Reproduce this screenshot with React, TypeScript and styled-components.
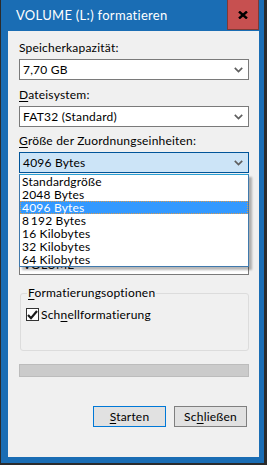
import { styled, createGlobalStyle } from 'styled-components'

const GlobalStyle = createGlobalStyle`
  html, body {
    margin: 0;
    padding: 0;
    background: #ffffff;
  }
  body {
    font-family: Lato, "Liberation Sans", sans-serif;
    font-size: 12px;
    letter-spacing: 0.2px;
    color: #000000;
  }
`

const Window = styled.div`
  box-sizing: border-box;
  width: 267px;
  height: 465px;
  display: flex;
  flex-direction: column;
  background: #1a6db4;
  border-left: 1px solid #2b2b2b;
  border-right: 3px solid #2b2b2b;
  border-bottom: 2px solid #2b2b2b;
  padding: 0 5px 6px 7px;
`

const TitleBar = styled.div`
  display: flex;
  align-items: flex-start;
  height: 31px;
  flex-shrink: 0;
`

const Title = styled.div`
  padding-left: 8px;
  line-height: 30px;
  font-size: 13px;
  letter-spacing: 0.3px;
  color: #ffffff;
`

const CloseButton = styled.div`
  box-sizing: border-box;
  margin-left: auto;
  width: 32px;
  height: 30px;
  background: #c75050;
  border: 1px solid #7d3a36;
  border-top: none;
  display: grid;
  place-items: center;
  padding-top: 1px;
`

const Panel = styled.div`
  position: relative;
  flex: 1;
  background: #f0f0f0;
  padding: 9px 10px 0 11px;
  display: flex;
  flex-direction: column;
`

const Field = styled.div<{ $mt?: number }>`
  position: relative;
  display: flex;
  flex-direction: column;
  margin-top: ${(p) => p.$mt ?? 0}px;
`

const Label = styled.div`
  line-height: 15px;
  margin-bottom: 4px;
  white-space: nowrap;
`

const Key = styled.span`
  text-decoration: underline;
  text-underline-offset: 2px;
`

const SelectBox = styled.div<{ $focused?: boolean }>`
  box-sizing: border-box;
  height: 21px;
  display: flex;
  align-items: center;
  padding: 0 5px 0 3px;
  background: ${(p) => (p.$focused ? '#cce4f7' : '#ffffff')};
  border: 1px solid ${(p) => (p.$focused ? '#005499' : '#7a7a7a')};
`

const SelectValue = styled.span`
  flex: 1;
  line-height: 19px;
`

const DropList = styled.div`
  position: absolute;
  top: calc(100% + 1px);
  left: 0;
  right: 0;
  z-index: 2;
  background: #ffffff;
  border: 1px solid #3f79ad;
  border-top-color: #2aa0d4;
  box-shadow: 3px 3px 2px rgba(0, 0, 0, 0.28);
`

const Option = styled.div<{ $selected?: boolean }>`
  box-sizing: border-box;
  height: 13px;
  line-height: 13px;
  padding-left: 2px;
  white-space: nowrap;
  background: ${(p) => (p.$selected ? '#3399ff' : 'transparent')};
  color: ${(p) => (p.$selected ? '#ffffff' : '#000000')};
  outline: ${(p) => (p.$selected ? '1px dotted #d99a4e' : 'none')};
  outline-offset: -1px;
`

// volume label box, mostly covered by the open list
const TextBox = styled.div<{ $mt?: number }>`
  box-sizing: border-box;
  margin-top: ${(p) => p.$mt ?? 0}px;
  height: 21px;
  line-height: 19px;
  padding-left: 3px;
  background: #ffffff;
  border: 1px solid #7a7a7a;
`

const GroupBox = styled.fieldset`
  box-sizing: border-box;
  margin: 10px 0 0 1px;
  padding: 6px 5px 0 5px;
  height: 66px;
  border: 1px solid #dcdcdc;
  border-radius: 3px;
  min-width: 0;
`

const Legend = styled.legend`
  margin-left: 1px;
  padding: 0 1px;
  line-height: 16px;
`

const CheckRow = styled.div`
  display: flex;
  align-items: center;
  gap: 2px;
  line-height: 15px;
`

const CheckBox = styled.div`
  box-sizing: border-box;
  width: 13px;
  height: 13px;
  background: #ffffff;
  border: 1px solid #333333;
  display: grid;
  place-items: center;
`

const Progress = styled.div`
  box-sizing: border-box;
  margin-top: 13px;
  height: 13px;
  background: #cbcbcb;
  border: 1px solid #bcbcbc;
`

const ButtonRow = styled.div`
  display: flex;
  justify-content: flex-end;
  gap: 8px;
  margin: 29px 2px 0 0;
`

const Button = styled.div<{ $default?: boolean }>`
  box-sizing: border-box;
  width: 73px;
  height: 21px;
  line-height: 19px;
  text-align: center;
  background: #e1e1e1;
  border: 1px solid ${(p) => (p.$default ? '#0078d7' : '#7f7f7f')};
`

function Chevron() {
  return (
    <svg width="9" height="6" viewBox="0 0 9 6">
      <path d="M0.8 0.8 L4.5 4.5 L8.2 0.8" fill="none" stroke="#5f5f5f" strokeWidth="1.7" />
    </svg>
  )
}

function Select({ value, focused }: { value: string; focused?: boolean }) {
  return (
    <SelectBox $focused={focused}>
      <SelectValue>{value}</SelectValue>
      <Chevron />
    </SelectBox>
  )
}

const units = [
  'Standardgröße',
  '2048 Bytes',
  '4096 Bytes',
  '8\u2009192 Bytes',
  '16 Kilobytes',
  '32 Kilobytes',
  '64 Kilobytes',
]

export default function App() {
  return (
    <>
      <GlobalStyle />
      <Window>
        <TitleBar>
          <Title>VOLUME (L:) formatieren</Title>
          <CloseButton>
            <svg width="10" height="8" viewBox="0 0 10 8">
              <path d="M1 0.5 L9 7.5 M9 0.5 L1 7.5" stroke="#000000" strokeWidth="2.4" />
            </svg>
          </CloseButton>
        </TitleBar>
        <Panel>
          <Field>
            <Label>Speicherkapazität:</Label>
            <Select value="7,70 GB" />
          </Field>
          <Field $mt={7}>
            <Label>
              <Key>D</Key>ateisystem:
            </Label>
            <Select value="FAT32 (Standard)" />
          </Field>
          <Field $mt={6}>
            <Label>
              <Key>G</Key>röße der Zuordnungseinheiten:
            </Label>
            <Select value="4096 Bytes" focused />
            <DropList>
              {units.map((u) => (
                <Option key={u} $selected={u === '4096 Bytes'}>
                  {u}
                </Option>
              ))}
            </DropList>
          </Field>
          <TextBox $mt={81}>VOLUME</TextBox>
          <GroupBox>
            <Legend>
              <Key>F</Key>ormatierungsoptionen
            </Legend>
            <CheckRow>
              <CheckBox>
                <svg width="11" height="10" viewBox="0 0 11 10">
                  <path d="M1 5 L4 8.2 L10 1" fill="none" stroke="#1a1a1a" strokeWidth="2.2" />
                </svg>
              </CheckBox>
              <span>
                Sch<Key>n</Key>ellformatierung
              </span>
            </CheckRow>
          </GroupBox>
          <Progress />
          <ButtonRow>
            <Button $default>
              <Key>S</Key>tarten
            </Button>
            <Button>
              Sc<Key>h</Key>ließen
            </Button>
          </ButtonRow>
        </Panel>
      </Window>
    </>
  )
}
